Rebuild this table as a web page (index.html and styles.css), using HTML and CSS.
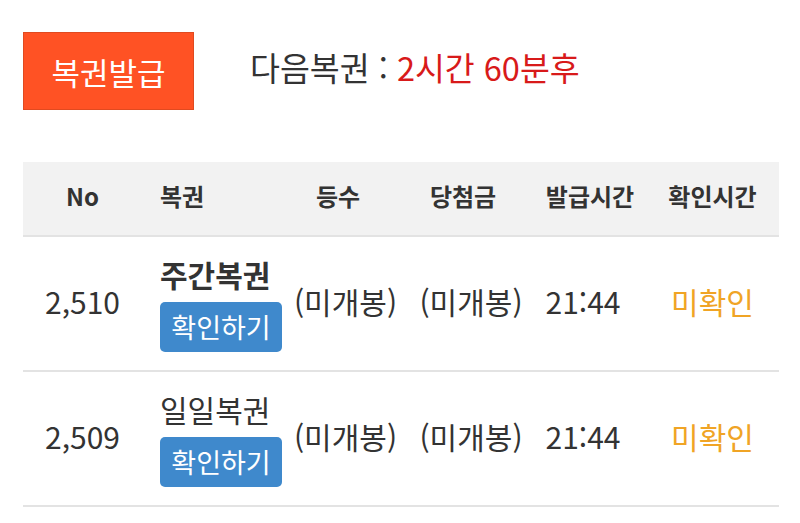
FILE: index.html
```html
<!DOCTYPE html>
<html lang="ko">
<head>
<meta charset="utf-8">
<link rel="stylesheet" href="styles.css">
</head>
<body>
<div class="page">
  <div class="top">
    <button class="issue">복권발급</button>
    <div class="next">다음복권 : <span class="remain">2시간 60분후</span></div>
  </div>
  <div class="table">
    <div class="row head">
      <div class="c c1">No</div>
      <div class="c c2">복권</div>
      <div class="c c3">등수</div>
      <div class="c c4">당첨금</div>
      <div class="c c5">발급시간</div>
      <div class="c c6">확인시간</div>
    </div>
    <div class="row body">
      <div class="c c1">2,510</div>
      <div class="c c2"><div class="name bold">주간복권</div><button class="check">확인하기</button></div>
      <div class="c c3">(미개봉)</div>
      <div class="c c4">(미개봉)</div>
      <div class="c c5">21:44</div>
      <div class="c c6 unchecked">미확인</div>
    </div>
    <div class="row body">
      <div class="c c1">2,509</div>
      <div class="c c2"><div class="name">일일복권</div><button class="check">확인하기</button></div>
      <div class="c c3">(미개봉)</div>
      <div class="c c4">(미개봉)</div>
      <div class="c c5">21:44</div>
      <div class="c c6 unchecked">미확인</div>
    </div>
  </div>
</div>
</body>
</html>
```
FILE: styles.css
```css
* { box-sizing: border-box; }
html, body { margin: 0; padding: 0; background: #fff; }
body {
  font-family: "Noto Sans CJK KR", "Noto Sans", sans-serif;
  color: #333;
  width: 800px;
  height: 523px;
  overflow: hidden;
}
.page { padding: 32px 21px 0 23px; }
.top { display: flex; align-items: center; height: 78px; }
.issue {
  width: 171px;
  height: 78px;
  background: #ff5224;
  border: 1px solid #e04a20;
  color: #fff;
  font-family: inherit;
  font-size: 31px;
  padding: 0;
  margin: 0;
  line-height: 1;
}
.next {
  margin-left: 56px;
  font-size: 32.5px;
  color: #333;
  line-height: 1;
  margin-top: -8px;
}
.remain { color: #d81a1a; }
.table { margin-top: 52px; width: 756px; }
.row {
  display: grid;
  grid-template-columns: 119px 141px 125px 126px 112px 133px;
  align-items: center;
  border-bottom: 2px solid #e3e3e3;
}
.head { height: 75px; background: #f2f2f2; font-weight: bold; font-size: 24px; }
.head .c { margin-top: -4px; }
.body { height: 135px; font-size: 30px; }
.body .c { margin-top: -5px; }
.body .c2 { margin-top: 0; }
.c { text-align: center; line-height: 1.2; }
.c2 { text-align: left; padding-left: 18px; }
.head .c3 { padding-right: 15px; }
.head .c4 { padding-right: 16px; }
.body .c5 { padding-right: 14px; }
.name { font-size: 30px; line-height: 36px; }
.bold { font-weight: bold; }
.check {
  display: block;
  margin-top: 10px;
  width: 122px;
  height: 50px;
  background: #3f89cc;
  color: #fff;
  border: none;
  border-radius: 5px;
  font-family: inherit;
  font-size: 27px;
  padding: 0;
  line-height: 1;
}
.unchecked { color: #f0a425; }
```
